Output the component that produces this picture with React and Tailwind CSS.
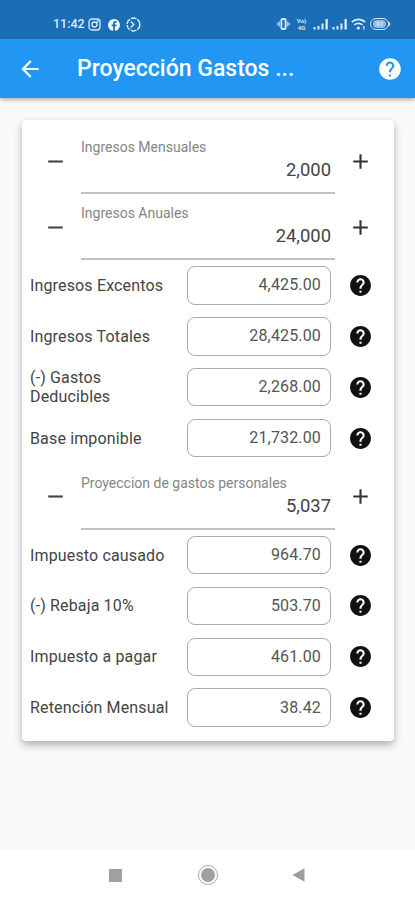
import React from 'react';
import { MdAdd, MdArrowBack, MdHelp, MdRemove } from 'react-icons/md';

const ingresos = [
  { label: 'Ingresos Excentos', value: '4,425.00' },
  { label: 'Ingresos Totales', value: '28,425.00' },
  { label: '(-) Gastos Deducibles', value: '2,268.00' },
  { label: 'Base imponible', value: '21,732.00' },
];

const impuestos = [
  { label: 'Impuesto causado', value: '964.70' },
  { label: '(-) Rebaja 10%', value: '503.70' },
  { label: 'Impuesto a pagar', value: '461.00' },
  { label: 'Retención Mensual', value: '38.42' },
];

function SignalIcon() {
  return (
    <svg width="16" height="12" viewBox="0 0 16 12" fill="currentColor">
      <rect x="0.5" y="9" width="2" height="2.5" />
      <rect x="4.5" y="8" width="2" height="3.5" />
      <rect x="8.5" y="5.5" width="2" height="6" />
      <rect x="12.5" y="1" width="2.3" height="10.5" />
    </svg>
  );
}

function StatusBar() {
  return (
    <div className="flex h-[39px] items-end justify-between bg-[#1b6db5] pr-[25px] pb-[7px] pl-[53px] text-[#d9ecfb]">
      <div className="flex h-4 items-center">
        <span className="w-[35px] text-[12.5px] leading-4 font-medium whitespace-nowrap">11:42</span>
        <svg className="mt-px" width="13" height="13" viewBox="0 0 13 13" fill="none" stroke="currentColor" strokeWidth="1.3">
          <rect x="1" y="1" width="11" height="11" rx="3" />
          <circle cx="6.5" cy="6.5" r="2.5" />
          <circle cx="9.6" cy="3.4" r="0.4" />
        </svg>
        <svg className="mt-px ml-[7px]" width="12" height="12" viewBox="0 0 12 12">
          <circle cx="6" cy="6" r="6" fill="#f1f8fe" />
          <path d="M5.2 12V7.3H3.6V5.5h1.6V4.3c0-1.6.9-2.3 2.2-2.3h1.2v1.7h-.8c-.7 0-.9.3-.9.9v.9h1.7l-.3 1.8H6.9V12z" fill="#1b6db5" />
        </svg>
        <svg className="mt-px ml-[6px]" width="15" height="15" viewBox="0 0 15 15" fill="none" stroke="currentColor">
          <circle cx="7.5" cy="7.5" r="6.4" strokeWidth="1.5" strokeDasharray="5.7 1" />
          <path d="M4.8 4.6l3 2.9-3 2.9" strokeWidth="1.4" />
        </svg>
      </div>
      <div className="flex h-4 items-center">
        <svg width="13" height="12" viewBox="0 0 13 12" fill="none" stroke="currentColor" strokeWidth="1.8">
          <rect x="4.4" y="1" width="4.2" height="10" rx="1" />
          <path d="M2.2 3.5v5M10.8 3.5v5M0.5 5v2M12.5 5v2" strokeWidth="1.1" />
        </svg>
        <div className="ml-[5px] flex w-[13px] flex-col text-center text-[6px] leading-[7px] font-bold">
          <span>Vo)</span>
          <span>4G</span>
        </div>
        <div className="ml-[5px] flex gap-[3px]">
          <SignalIcon />
          <SignalIcon />
        </div>
        <svg className="ml-[3px]" width="15" height="12" viewBox="0 0 15 12" fill="none" stroke="currentColor" strokeWidth="1.7">
          <path d="M0.8 4.2a9.4 9.4 0 0 1 13.4 0M3.2 7a6 6 0 0 1 8.4 0" />
          <circle cx="7.3" cy="10" r="1.6" fill="currentColor" stroke="none" />
          <path d="M12.9 8v3.6" strokeWidth="1.3" />
        </svg>
        <div className="ml-1 flex h-[12px] w-[19px] items-center justify-center rounded-full border-[1.5px] border-[#cfe5f7]">
          <span className="flex h-[8px] w-[13px] items-center justify-center rounded-full bg-[#8fbfe2] text-[6px] leading-none font-bold">97</span>
        </div>
        <span className="h-1 w-px bg-[#cfe5f7]" />
      </div>
    </div>
  );
}

function AppBar() {
  return (
    <div className="relative flex h-[59px] items-center bg-[#2196f3] pr-[12px] pl-[17px] text-white shadow-[0_2px_4px_rgba(0,0,0,0.3)]">
      <MdArrowBack className="h-[26px] w-[26px]" />
      <h1 className="ml-[34px] flex-1 text-[23px] leading-none font-medium whitespace-nowrap">
        Proyección Gastos ...
      </h1>
      <MdHelp className="h-[26px] w-[26px]" />
    </div>
  );
}

function Stepper({ label, value }) {
  return (
    <div className="flex h-[66px]">
      <button className="flex w-[59px] items-center justify-center pl-[8px]">
        <MdRemove className="h-[25px] w-[25px] text-[#444]" />
      </button>
      <div className="flex w-[254px] flex-col border-b-2 border-[#c2c2c2] pt-[10px]">
        <span className="text-[14px] leading-[18px] whitespace-nowrap text-[#858585]">{label}</span>
        <span className="pt-[3px] pr-1 text-right text-[18.4px] leading-[22px] text-[#444]">{value}</span>
      </div>
      <button className="flex w-[51px] items-center justify-center">
        <MdAdd className="h-[25px] w-[25px] text-[#333]" />
      </button>
    </div>
  );
}

function ResultRow({ label, value }) {
  return (
    <div className="flex h-[50.9px] items-center pl-2">
      <span className="w-[157px] pr-3 text-[16px] leading-[19px] tracking-[0.15px] text-[#444]">
        {label}
      </span>
      <div className="flex h-[38.5px] w-[144px] items-center justify-end rounded-[8px] border border-[#ababab] pr-[9px] text-[16px] tracking-[0.15px] text-[#555]">
        {value}
      </div>
      <MdHelp className="ml-[17px] h-[25px] w-[25px] text-[#111]" />
    </div>
  );
}

function NavBar() {
  return (
    <div className="flex h-[50px] items-center bg-white pl-[109px] text-[#9e9e9e]">
      <span className="h-[13px] w-[13px] bg-[#a0a0a0]" />
      <span className="ml-[76px] flex h-[20px] w-[20px] items-center justify-center rounded-full border-[1.5px] border-[#a8a8a8]">
        <span className="h-[14px] w-[14px] rounded-full bg-[#a0a0a0]" />
      </span>
      <svg className="ml-[74px]" width="13" height="14" viewBox="0 0 13 14" fill="currentColor">
        <path d="M0.5 7L12.5 0.2v13.6z" />
      </svg>
    </div>
  );
}

export default function App() {
  return (
    <div className="flex h-[900px] w-[415px] flex-col overflow-hidden bg-[#fafafa] font-[Roboto,sans-serif]">
      <StatusBar />
      <AppBar />

      <main className="flex-1 pt-[22px] pl-[22px]">
        <div className="h-[621px] w-[372px] rounded-[4px] bg-white pt-2 shadow-[0_4px_9px_rgba(0,0,0,0.3)]">
          <Stepper label="Ingresos Mensuales" value="2,000" />
          <Stepper label="Ingresos Anuales" value="24,000" />
          {ingresos.map((row) => (
            <ResultRow key={row.label} {...row} />
          ))}
          <Stepper label="Proyeccion de gastos personales" value="5,037" />
          {impuestos.map((row) => (
            <ResultRow key={row.label} {...row} />
          ))}
        </div>
      </main>

      <NavBar />
    </div>
  );
}
